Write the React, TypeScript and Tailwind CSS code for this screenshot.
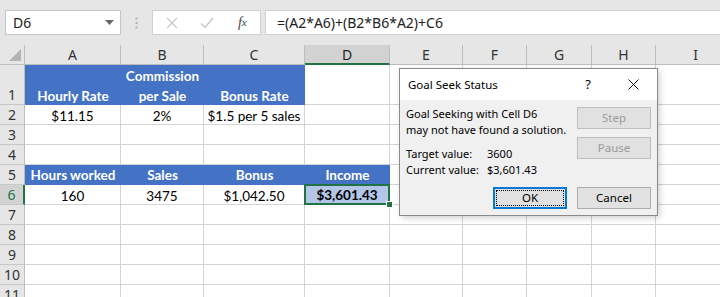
import React from "react";

type Kind = "plain" | "blue" | "sel";
type CellDef = { t?: string; l2?: string; k?: Kind; b?: boolean };

const FONT_CELL = { fontFamily: "Lato, 'Liberation Sans', sans-serif" };
const FONT_UI = { fontFamily: "'Noto Sans', 'Open Sans', 'Liberation Sans', sans-serif" };

const cols = ["A", "B", "C", "D", "E", "F", "G", "H", "I"];

const rows: { n: string; h: "tall" | "norm"; cells: CellDef[] }[] = [
  {
    n: "1",
    h: "tall",
    cells: [
      { t: "Hourly Rate", k: "blue", b: true },
      { t: "Commission", l2: "per Sale", k: "blue", b: true },
      { t: "Bonus Rate", k: "blue", b: true },
    ],
  },
  { n: "2", h: "norm", cells: [{ t: "$11.15" }, { t: "2%" }, { t: "$1.5 per 5 sales" }] },
  { n: "3", h: "norm", cells: [] },
  { n: "4", h: "norm", cells: [] },
  {
    n: "5",
    h: "norm",
    cells: [
      { t: "Hours worked", k: "blue", b: true },
      { t: "Sales", k: "blue", b: true },
      { t: "Bonus", k: "blue", b: true },
      { t: "Income", k: "blue", b: true },
    ],
  },
  {
    n: "6",
    h: "norm",
    cells: [{ t: "160" }, { t: "3475" }, { t: "$1,042.50" }, { t: "$3,601.43", k: "sel", b: true }],
  },
  { n: "7", h: "norm", cells: [] },
  { n: "8", h: "norm", cells: [] },
  { n: "9", h: "norm", cells: [] },
  { n: "10", h: "norm", cells: [] },
  { n: "11", h: "norm", cells: [] },
];

function Cell({ c, tall }: { c: CellDef; tall: boolean }) {
  const k = c.k ?? "plain";
  if (k === "blue") {
    return (
      <div
        className="relative flex flex-col items-center justify-end whitespace-nowrap bg-[#4472c4] text-white text-[13.5px] leading-[20px] font-bold border-b border-[#4472c4]"
        style={FONT_CELL}
      >
        {c.l2 ? (
          <>
            <span className={`relative ${tall ? "top-[2px]" : "top-[1px]"}`}>{c.t}</span>
            <span className={`relative ${tall ? "top-[2px]" : "top-[1px]"}`}>{c.l2}</span>
          </>
        ) : (
          <span className={`relative ${tall ? "top-[2px]" : "top-[1px]"}`}>{c.t}</span>
        )}
      </div>
    );
  }
  if (k === "sel") {
    return (
      <div className="relative border-r border-b border-[#d4d4d4]">
        <div
          className="absolute -left-[1px] -top-[1px] right-[-1px] bottom-[-1px] flex items-center justify-center whitespace-nowrap bg-[#b4c6e7] border-2 border-[#217346] text-[13.5px] font-bold text-black"
          style={FONT_CELL}
        >
          <span className="relative top-[1px]">{c.t}</span>
        </div>
        <div className="absolute right-[-4px] bottom-[-4px] w-[7px] h-[7px] bg-[#217346] border border-white" />
      </div>
    );
  }
  return (
    <div
      className={`flex justify-center whitespace-nowrap ${tall ? "items-end" : "items-center"} border-r border-b border-[#d4d4d4] text-[13.5px] text-black leading-[20px] ${c.b ? "font-bold" : ""}`}
      style={FONT_CELL}
    >
      <span className="relative top-[1px]">{c.t}</span>
    </div>
  );
}

function FormulaBar() {
  return (
    <div className="flex items-center h-[45px] bg-[#e6e6e6]" style={FONT_UI}>
      <div className="ml-[5px] w-[116px] h-[25px] bg-white border border-[#c6c6c6] flex items-center justify-between pl-[7px] pr-[6px] text-[14px] text-[#222]">
        <span>D6</span>
        <svg width="9" height="5" viewBox="0 0 9 5">
          <path d="M0 0 L9 0 L4.5 5 Z" fill="#6a6a6a" />
        </svg>
      </div>
      <div className="w-[31px] flex justify-center">
        <svg width="3" height="12" viewBox="0 0 3 12">
          <rect x="0.5" y="0.5" width="2" height="2" fill="#b0b0b0" />
          <rect x="0.5" y="5" width="2" height="2" fill="#b0b0b0" />
          <rect x="0.5" y="9.5" width="2" height="2" fill="#b0b0b0" />
        </svg>
      </div>
      <div className="w-[109px] h-[25px] bg-white border border-[#d0d0d0] flex items-center">
        <div className="w-[37px] flex justify-center pl-[2px]">
          <svg width="12" height="12" viewBox="0 0 12 12">
            <path d="M1 1 L11 11 M11 1 L1 11" stroke="#c8c8c8" strokeWidth="1.3" />
          </svg>
        </div>
        <div className="w-[36px] flex justify-center">
          <svg width="14" height="12" viewBox="0 0 14 12">
            <path d="M1 6.5 L5 10.5 L13 1" stroke="#c8c8c8" strokeWidth="1.5" fill="none" />
          </svg>
        </div>
        <div
          className="w-[36px] flex justify-center text-[14px] italic text-[#444]"
          style={{ fontFamily: "'Liberation Serif', 'DejaVu Serif', serif" }}
        >
          f<span className="text-[11px] relative top-[2px]">x</span>
        </div>
      </div>
      <div className="ml-[4px] flex-1 h-[25px] bg-white border border-[#d0d0d0] border-r-0 flex items-center pl-[11px] text-[14px] text-[#222]">
        =(A2*A6)+(B2*B6*A2)+C6
      </div>
    </div>
  );
}

function Sheet() {
  return (
    <div className="grid grid-cols-[25px_96px_83px_101px_85px_73px_64px_65px_64px_80px] grid-rows-[20px_40px_20px_20px_20px_20px_20px_20px_20px_20px_20px_20px] bg-white">
      <div className="relative bg-[#e6e6e6] border-r border-b border-[#bdbdbd]">
        <svg className="absolute right-[3px] bottom-[3px]" width="12" height="12" viewBox="0 0 12 12">
          <path d="M12 0 L12 12 L0 12 Z" fill="#b4b4b4" />
        </svg>
      </div>
      {cols.map((c) => (
        <div
          key={c}
          className={`flex items-center justify-center text-[14px] border-r ${
            c === "D"
              ? "bg-[#d2d2d2] text-[#222] border-b-2 border-b-[#217346] border-r-[#bdbdbd]"
              : "bg-[#e6e6e6] text-[#333] border-b border-[#bdbdbd]"
          }`}
          style={FONT_UI}
        >
          {c}
        </div>
      ))}
      {rows.map((r) => {
        const tall = r.h === "tall";
        const sel = r.n === "6";
        return (
          <React.Fragment key={r.n}>
            <div
              className={`flex justify-center ${tall ? "items-end" : "items-center"} text-[14px] leading-[20px] border-b border-[#c8c8c8] ${
                sel
                  ? "bg-[#d2d2d2] text-[#217346] border-r-2 border-r-[#217346]"
                  : "bg-[#e6e6e6] text-[#333] border-r border-r-[#bdbdbd]"
              }`}
              style={FONT_UI}
            >
              <span className={`relative ${tall ? "top-[1px]" : ""}`}>{r.n}</span>
            </div>
            {Array.from({ length: 9 }).map((_, i) => (
              <Cell key={i} c={r.cells[i] ?? {}} tall={tall} />
            ))}
          </React.Fragment>
        );
      })}
    </div>
  );
}

function Btn({ label, kind }: { label: string; kind: "dis" | "def" | "norm" }) {
  if (kind === "def") {
    return (
      <div className="w-[74px] h-[22px] border-2 border-[#0078d7] bg-[#e1e1e1] p-[1px]">
        <div className="w-full h-full border border-dotted border-black flex items-center justify-center text-[11.5px] text-black">
          {label}
        </div>
      </div>
    );
  }
  return (
    <div
      className={`w-[74px] h-[22px] border flex items-center justify-center text-[11.5px] ${
        kind === "dis" ? "border-[#bfbfbf] bg-[#e1e1e1] text-[#9a9a9a]" : "border-[#adadad] bg-[#e1e1e1] text-black"
      }`}
    >
      {label}
    </div>
  );
}

function Dialog() {
  return (
    <div
      className="absolute left-[399px] top-[68px] w-[259px] h-[148px] bg-[#f0f0f0] border border-[#8a8a8a] shadow-[2px_2px_6px_rgba(0,0,0,0.18)] flex flex-col"
      style={FONT_UI}
    >
      <div className="h-[31px] shrink-0 bg-white flex items-center text-[11.5px] text-black">
        <span className="pl-[8px] flex-1">Goal Seek Status</span>
        <span className="w-[20px] text-center text-[13px] mr-[30px]">?</span>
        <svg className="mr-[18px]" width="11" height="11" viewBox="0 0 11 11">
          <path d="M0.5 0.5 L10.5 10.5 M10.5 0.5 L0.5 10.5" stroke="#111" strokeWidth="1" />
        </svg>
      </div>
      <div className="flex-1 flex flex-col pl-[6px] pr-[6px] pt-[6px] pb-[6px]">
        <div className="flex justify-between">
          <div className="text-[11px] text-black leading-[16px] whitespace-nowrap">
            <div>Goal Seeking with Cell D6</div>
            <div>may not have found a solution.</div>
            <div className="mt-[8px] flex">
              <span className="w-[81px]">Target value:</span>
              <span>3600</span>
            </div>
            <div className="flex">
              <span className="w-[81px]">Current value:</span>
              <span>$3,601.43</span>
            </div>
          </div>
          <div className="flex flex-col gap-[8px] pt-[1px] shrink-0">
            <Btn label="Step" kind="dis" />
            <Btn label="Pause" kind="dis" />
          </div>
        </div>
        <div className="flex justify-end gap-[10px] mt-auto">
          <Btn label="OK" kind="def" />
          <Btn label="Cancel" kind="norm" />
        </div>
      </div>
    </div>
  );
}

export default function App() {
  return (
    <div className="relative w-[720px] h-[297px] overflow-hidden bg-white">
      <FormulaBar />
      <Sheet />
      <Dialog />
    </div>
  );
}
